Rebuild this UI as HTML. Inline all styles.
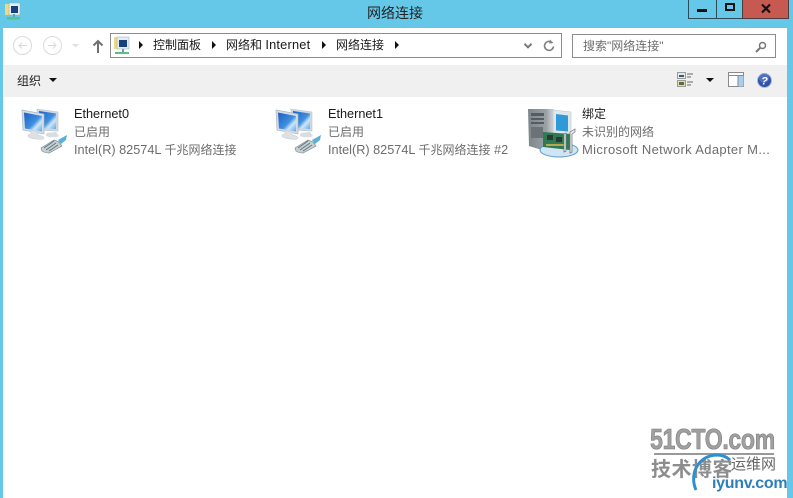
<!DOCTYPE html>
<html><head><meta charset="utf-8">
<style>
html,body{margin:0;padding:0}
body{width:793px;height:498px;position:relative;overflow:hidden;background:#65c8e9;font-family:"Liberation Sans","Noto Sans CJK SC",sans-serif;color:#1a1a1a}
.a{position:absolute}
.t{position:absolute;white-space:nowrap;font-size:12px;line-height:16px}
.g{color:#6d6d6d}
.l{font-size:12.7px}
svg{position:absolute;overflow:visible}
</style></head><body>
<div class="a" style="left:3px;top:28px;width:784px;height:470px;background:#fff"></div>
<div class="a" style="left:3px;top:65px;width:784px;height:32px;background:#f0f0f0"></div>

<svg width="0" height="0" style="left:0;top:0"><defs>
<linearGradient id="sc" x1="0" y1="0" x2="1" y2="1"><stop offset="0" stop-color="#1f5fc4"/><stop offset=".55" stop-color="#3f8fe0"/><stop offset=".72" stop-color="#cfe6f8"/><stop offset="1" stop-color="#5ea6e6"/></linearGradient>
<linearGradient id="tw" x1="0" y1="0" x2="1" y2="0"><stop offset="0" stop-color="#7f868b"/><stop offset=".7" stop-color="#9aa1a5"/><stop offset="1" stop-color="#d3d8da"/></linearGradient>
</defs></svg>

<svg style="left:5px;top:3px" width="17" height="17" viewBox="0 0 17 17"><rect x="0" y="1" width="8" height="11" fill="#ecd98a"/><rect x="4" y="0" width="11" height="12" fill="#e4ebf2" stroke="#9aa" stroke-width=".5"/><rect x="6" y="3" width="7" height="7" fill="#17407f"/><rect x="2" y="14" width="13" height="2.500" fill="#5cc08a"/><rect x="8" y="11" width="2" height="3" fill="#5aa"/></svg>
<div class="t" style="left:300px;top:4px;width:190px;text-align:center;font-size:14px;line-height:18px;color:#222">网络连接</div>

<div class="a" style="left:688px;top:0;width:28px;height:19px;box-sizing:border-box;border:1px solid #2b4a5c;border-top:0;border-right:0"></div>
<div class="a" style="left:697px;top:9px;width:10px;height:3px;background:#111"></div>
<div class="a" style="left:716px;top:0;width:26px;height:19px;box-sizing:border-box;border:1px solid #2b4a5c;border-top:0;border-right:0"></div>
<div class="a" style="left:725px;top:3px;width:10px;height:8px;box-sizing:border-box;border:2px solid #111"></div>
<div class="a" style="left:742px;top:0;width:47px;height:19px;box-sizing:border-box;background:#c75a50;border:1px solid #4d3c40;border-top:0"></div>
<svg style="left:761px;top:4px" width="10" height="9" viewBox="0 0 10 9" fill="none" stroke="#111" stroke-width="2.200"><path d="M1 .5l8 8M9 .5l-8 8"/></svg>

<svg style="left:13px;top:35px" width="80" height="22" viewBox="0 0 80 22" fill="none" stroke="#dadada"><circle cx="9.500" cy="10.500" r="9"/><path d="M14 10.500H6M9 7.500l-3 3 3 3"/><circle cx="39.500" cy="10.500" r="9"/><path d="M35 10.500h8M40 7.500l3 3-3 3"/><path d="M59 9l3.500 3.500L66 9H59z" fill="#e2e2e2" stroke="none"/></svg>
<svg style="left:92px;top:39px" width="12" height="14" viewBox="0 0 12 14" fill="none" stroke="#6f6f6f" stroke-width="2"><path d="M6 14V2M1.500 6.500L6 2l4.500 4.500"/></svg>

<div class="a" style="left:110px;top:33px;width:452px;height:25px;box-sizing:border-box;border:1px solid #8c8c8c;background:#fff"></div>
<svg style="left:114px;top:37px" width="16" height="18" viewBox="0 0 16 18"><rect x="0" y="0" width="8" height="12" fill="#ecd98a"/><rect x="3" y="0" width="12" height="12" fill="#e4ebf2" stroke="#9aa" stroke-width=".5"/><rect x="5" y="3" width="8" height="7" fill="#17407f"/><rect x="8" y="12" width="2" height="3" fill="#5aa"/><rect x="1" y="15" width="14" height="2" fill="#5cc08a"/></svg>
<svg style="left:0;top:0" width="793" height="60"><g fill="#111"><path d="M139 41l4 4-4 4zM212 41l4 4-4 4zM322 41l4 4-4 4zM395 41l4 4-4 4z"/></g></svg>
<div class="t" style="left:153px;top:37px">控制面板</div>
<div class="t" style="left:226px;top:37px">网络和 <span style="font-size:12.8px;letter-spacing:.2px">Internet</span></div>
<div class="t" style="left:336px;top:37px">网络连接</div>
<svg style="left:524px;top:43px" width="8" height="6" viewBox="0 0 8 6" fill="none" stroke="#777" stroke-width="2"><path d="M.5.8L4 4.300 7.500.8"/></svg>
<svg style="left:543px;top:39px" width="12" height="13" viewBox="0 0 12 13" fill="none" stroke="#808080" stroke-width="1.600"><path d="M9.500 4A4.500 4.500 0 1 0 10.500 7.500"/><path d="M7 .5l3 3.500-4 .5z" fill="#808080" stroke="none"/></svg>

<div class="a" style="left:572px;top:34px;width:204px;height:24px;box-sizing:border-box;border:1px solid #8c8c8c;background:#fff"></div>
<div class="t g" style="left:583px;top:38px">搜索"网络连接"</div>
<svg style="left:755px;top:41px" width="12" height="12" viewBox="0 0 12 12" fill="none" stroke="#777" stroke-width="1.500"><circle cx="7.500" cy="4.500" r="3"/><path d="M5 7L1 11" stroke-width="2"/></svg>

<div class="t" style="left:17px;top:73px;color:#222">组织</div>
<div class="a" style="left:49px;top:78px;width:0;height:0;border-left:4.500px solid transparent;border-right:4.500px solid transparent;border-top:4.500px solid #111"></div>

<svg style="left:677px;top:72px" width="17" height="16" viewBox="0 0 17 16"><rect x=".5" y=".5" width="8" height="6" fill="#dfeaf0" stroke="#888" stroke-width=".8"/><rect x="2" y="3" width="5" height="2" fill="#456"/><rect x=".5" y="8.500" width="8" height="6" fill="#d8e4a0" stroke="#888" stroke-width=".8"/><rect x="2" y="10" width="5" height="3" fill="#664"/><path d="M10 2h6M10 5h4M10 10h6M10 13h4" stroke="#666" stroke-width="1"/></svg>
<div class="a" style="left:706px;top:78px;width:0;height:0;border-left:4px solid transparent;border-right:4px solid transparent;border-top:4px solid #111"></div>
<svg style="left:728px;top:72px" width="17" height="15" viewBox="0 0 17 15"><rect x=".5" y=".5" width="15" height="14" fill="#fff" stroke="#8a8a8a"/><path d="M.5 3.500h15" stroke="#8a8a8a"/><rect x="10" y="4" width="5.500" height="10.500" fill="#a9cfee"/><path d="M10 3.500v11" stroke="#8a8a8a"/></svg>
<svg style="left:757px;top:73px" width="15" height="15" viewBox="0 0 15 15"><circle cx="7.500" cy="7.500" r="7" fill="#2f52a8" stroke="#a9b9dd"/><circle cx="7" cy="5" r="5" fill="#6f8fd4" opacity=".5"/><text x="7.500" y="11.500" text-anchor="middle" font-family="Liberation Sans" font-size="11" font-weight="bold" font-style="italic" fill="#fff">?</text></svg>

<!-- Network icons -->
<svg style="left:20px;top:106px" width="48" height="48" viewBox="0 0 48 48">
<path d="M17 3l21 3v19l-21-1z" fill="#cdd8e2" stroke="#b7c5d0" stroke-width=".6"/><path d="M19 5l17 2.500v15.500l-17-1z" fill="url(#sc)"/>
<path d="M27 27q-3 3 2 4q8 1 10-1l-3-4z" fill="#d8dde0"/>
<path d="M2 4l22 4v20L3 24z" fill="#d3dde6" stroke="#a9b8c5" stroke-width=".7"/><path d="M4 6.500l18 3.500v15.500L5 22.500z" fill="url(#sc)"/>
<path d="M11 24l7 2v3q6 1 6 3t-8 1q-9-1-8-4 3-1 3-2z" fill="#dde1e3" stroke="#c4cbce" stroke-width=".5"/>
<path d="M21 42l13-8 5 2 3 4-13 7q-4 0-7-2z" fill="#c6d0d4" stroke="#7d8a90" stroke-width=".7"/><path d="M24 42l10-7M26 44l10-7M29 45l9-6" stroke="#66757c" stroke-width="1"/><path d="M38 34l9-5-1 5-5 4z" fill="#5bb0d8"/>
</svg>
<svg style="left:274px;top:106px" width="48" height="48" viewBox="0 0 48 48">
<path d="M17 3l21 3v19l-21-1z" fill="#cdd8e2" stroke="#b7c5d0" stroke-width=".6"/><path d="M19 5l17 2.500v15.500l-17-1z" fill="url(#sc)"/>
<path d="M27 27q-3 3 2 4q8 1 10-1l-3-4z" fill="#d8dde0"/>
<path d="M2 4l22 4v20L3 24z" fill="#d3dde6" stroke="#a9b8c5" stroke-width=".7"/><path d="M4 6.500l18 3.500v15.500L5 22.500z" fill="url(#sc)"/>
<path d="M11 24l7 2v3q6 1 6 3t-8 1q-9-1-8-4 3-1 3-2z" fill="#dde1e3" stroke="#c4cbce" stroke-width=".5"/>
<path d="M21 42l13-8 5 2 3 4-13 7q-4 0-7-2z" fill="#c6d0d4" stroke="#7d8a90" stroke-width=".7"/><path d="M24 42l10-7M26 44l10-7M29 45l9-6" stroke="#66757c" stroke-width="1"/><path d="M38 34l9-5-1 5-5 4z" fill="#5bb0d8"/>
</svg>
<svg style="left:528px;top:106px" width="52" height="52" viewBox="0 0 52 52">
<path d="M0 3h26v36l-9 6L1 40z" fill="url(#tw)"/><path d="M3 7h13v3H3zM3 12h13v2H3zM3 16h13v2H3z" fill="#565d62"/><path d="M3 21h12v11H3z" fill="#6c7378"/>
<path d="M25 4l18 2v22l-18-1z" fill="#dfe7ec" stroke="#bcc6cc" stroke-width=".6"/><path d="M28 8l12 1.500v16l-12-1z" fill="#2f9ad8"/>
<ellipse cx="31" cy="44" rx="19" ry="7" fill="#cfe5f3" stroke="#5b9cc4"/>
<path d="M15 26l27 2v16l-27-3z" fill="#2f7a53"/><path d="M19 29h6v5h-6zM28 31h6v5h-6z" fill="#2b3a33"/><path d="M18 38h20v2H18z" fill="#b9a94d"/>
<path d="M36 28l2-1v18l-2 1zM42 26l5-3v3l-3 2v18l-2 1z" fill="#e6eaec" stroke="#69737a" stroke-width=".7"/>
</svg>

<div class="t l" style="left:74px;top:106px">Ethernet0</div>
<div class="t g" style="left:74px;top:124px">已启用</div>
<div class="t g" style="left:74px;top:142px"><span class="l">Intel(R) 82574L </span>千兆网络连接</div>
<div class="t l" style="left:328px;top:106px">Ethernet1</div>
<div class="t g" style="left:328px;top:124px">已启用</div>
<div class="t g" style="left:328px;top:142px"><span class="l">Intel(R) 82574L </span>千兆网络连接<span class="l"> #2</span></div>
<div class="t" style="left:582px;top:106px">绑定</div>
<div class="t g" style="left:582px;top:124px">未识别的网络</div>
<div class="t g" style="left:582px;top:142px;font-size:13px;letter-spacing:.35px">Microsoft Network Adapter M...</div>

<!-- Watermark -->
<div class="t" style="left:650px;top:424px;font-size:29px;line-height:32px;font-weight:bold;color:#a0a0a0;letter-spacing:-.5px;-webkit-text-stroke:.6px #777;transform:scaleX(.8);transform-origin:left">51CTO.com</div>
<div class="a" style="left:654px;top:453px;width:120px;height:2px;background:#999"></div>
<div class="t" style="left:651px;top:458px;font-size:20px;line-height:24px;font-weight:bold;color:#8d8d8d;letter-spacing:.5px">技术博客</div>
<svg style="left:690px;top:450px" width="50" height="48" viewBox="0 0 50 48" fill="none" stroke="#2f8fcf" stroke-width="3"><path d="M6 40C-1 24 8 6 26 5c6 0 11 2 14 5"/></svg>
<div class="t" style="left:731px;top:457px;font-size:15px;line-height:16px;color:#666">运维网</div>
<div class="t" style="left:712px;top:474px;font-size:16px;line-height:20px;font-weight:bold;color:#2d7fb8;letter-spacing:-.3px">iyunv.com</div>
</body></html>
